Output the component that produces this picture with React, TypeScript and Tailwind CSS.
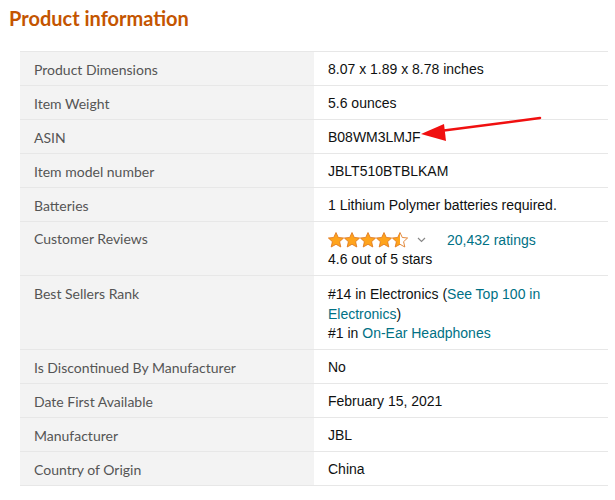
import React from "react"

const rows: { label: string; value: React.ReactNode }[] = [
  { label: "Product Dimensions", value: "8.07 x 1.89 x 8.78 inches" },
  { label: "Item Weight", value: "5.6 ounces" },
  { label: "ASIN", value: "B08WM3LMJF" },
  { label: "Item model number", value: "JBLT510BTBLKAM" },
  { label: "Batteries", value: "1 Lithium Polymer batteries required." },
]

const rows2 = [
  { label: "Is Discontinued By Manufacturer", value: "No" },
  { label: "Date First Available", value: "February 15, 2021" },
  { label: "Manufacturer", value: "JBL" },
  { label: "Country of Origin", value: "China" },
]

function Star({ fill }: { fill: "full" | "half" }) {
  return (
    <svg width="16" height="16" viewBox="0 0 24 24">
      <defs>
        <linearGradient id={"h" + fill}>
          <stop offset="50%" stopColor="#ffa41c" />
          <stop offset="50%" stopColor="#ffffff" />
        </linearGradient>
      </defs>
      <path
        d="M12 0.8l3.4 7.4 8 .8-6 5.5 1.8 8L12 18.4l-7.2 4.1 1.8-8-6-5.5 8-.8z"
        fill={fill === "full" ? "#ffa41c" : "url(#hhalf)"}
        stroke="#de7921"
        strokeWidth="1.3"
        strokeLinejoin="round"
      />
    </svg>
  )
}

function Label({ children }: { children: React.ReactNode }) {
  return (
    <div className="w-[294px] shrink-0 bg-[#f3f3f3] px-[14px] text-[14px] text-[#555] font-['Lato',sans-serif]">
      {children}
    </div>
  )
}

export default function App() {
  return (
    <div className="relative w-[615px] h-[500px] bg-white overflow-hidden font-['Liberation_Sans',Arial,sans-serif]">
      <h2 className="pl-[9px] pt-[5px] text-[20px] leading-[26px] font-bold text-[#c45500] font-['Lato',sans-serif]">
        Product information
      </h2>

      <div className="ml-[20px] mt-[20px] w-[588px] border-t border-[#e7e7e7]">
        {rows.map((r) => (
          <div key={r.label} className="flex h-[34px] border-b border-[#e7e7e7]">
            <Label>
              <div className="pt-[1px] leading-[33px]">{r.label}</div>
            </Label>
            <div className="px-[14px] pt-[1px] text-[14px] leading-[33px] text-[#0f1111]">{r.value}</div>
          </div>
        ))}

        {/* Customer reviews */}
        <div className="flex h-[54px] border-b border-[#e7e7e7]">
          <Label>
            <div className="pt-[7px] leading-[20px]">Customer Reviews</div>
          </Label>
          <div className="px-[14px] pt-[8px] text-[14px] text-[#0f1111]">
            <div className="flex items-center h-[20px]">
              <div className="flex gap-0">
                <Star fill="full" />
                <Star fill="full" />
                <Star fill="full" />
                <Star fill="full" />
                <Star fill="half" />
              </div>
              <svg className="ml-[9px]" width="9" height="6" viewBox="0 0 9 6">
                <path d="M1 1l3.5 3.5L8 1" fill="none" stroke="#888" strokeWidth="1.2" />
              </svg>
              <span className="ml-[21px] text-[#007185]">20,432 ratings</span>
            </div>
            <div className="leading-[19px]">4.6 out of 5 stars</div>
          </div>
        </div>

        {/* Best sellers rank */}
        <div className="flex h-[74px] border-b border-[#e7e7e7]">
          <Label>
            <div className="pt-[8px] leading-[20px]">Best Sellers Rank</div>
          </Label>
          <div className="w-[294px] px-[14px] pt-[9px] text-[14px] leading-[19.5px] text-[#0f1111]">
            <p>
              #14 in Electronics (<span className="text-[#007185]">See Top 100 in</span>
            </p>
            <p>
              <span className="text-[#007185]">Electronics</span>)
            </p>
            <p>
              #1 in <span className="text-[#007185]">On-Ear Headphones</span>
            </p>
          </div>
        </div>

        {rows2.map((r) => (
          <div key={r.label} className="flex h-[34px] border-b border-[#e7e7e7]">
            <Label>
              <div className="pt-[1px] leading-[33px]">{r.label}</div>
            </Label>
            <div className="px-[14px] pt-[1px] text-[14px] leading-[33px] text-[#0f1111]">{r.value}</div>
          </div>
        ))}
      </div>

      {/* annotation arrow */}
      <svg className="absolute left-0 top-0 pointer-events-none" width="615" height="500">
        <line x1="540" y1="118" x2="440" y2="131" stroke="#f01010" strokeWidth="2.5" strokeLinecap="round" />
        <polygon points="421,134 444,124 446,141" fill="#f01010" />
      </svg>
    </div>
  )
}
